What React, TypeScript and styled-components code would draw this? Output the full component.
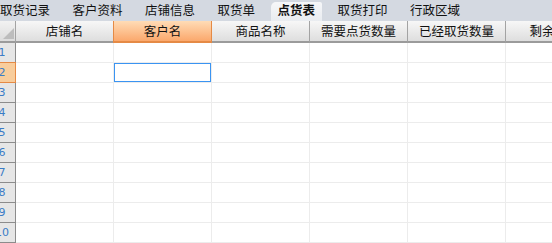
import React from "react";
import styled, { createGlobalStyle, css } from "styled-components";

const Global = createGlobalStyle`
  html, body { margin: 0; padding: 0; background: #ffffff; }
  body { overflow: hidden; font-family: "Noto Sans CJK SC", "Noto Sans", sans-serif; }
`;

const Screen = styled.div`
  width: 552px;
  height: 243px;
  overflow: hidden;
  background: #ffffff;
`;

const TabBar = styled.div`
  display: flex;
  align-items: flex-end;
  height: 21px;
  gap: 8.5px;
  background: #d4d9e1;
  padding-left: 0;
`;

const TabList = styled.div`
  display: flex;
  align-items: flex-end;
  gap: 8.5px;
  margin-left: -7px;
  height: 100%;
`;

const Tab = styled.div<{ $active?: boolean }>`
  height: 19px;
  padding: 0 7px;
  display: flex;
  align-items: center;
  font-size: 12.5px;
  line-height: 1;
  color: #111111;
  white-space: nowrap;
  border-radius: 5px 2px 0 0;
  padding-bottom: 3px;
  box-sizing: border-box;
  ${(p) =>
    p.$active &&
    css`
      font-weight: 700;
      background: linear-gradient(#f6f7f9, #e9ecf0);
    `}
`;

const Sheet = styled.div`
  display: grid;
  grid-template-columns: 16px repeat(6, 98px);
  grid-template-rows: 22px repeat(10, 20px);
`;

const Corner = styled.div`
  box-sizing: border-box;
  border-right: 1px solid #a3a3a3;
  border-bottom: 2px solid #9b9b9b;
  background: linear-gradient(#f2f2f2, #dcdcdc);
  display: flex;
  align-items: flex-end;
  justify-content: flex-end;
  padding: 0 1px 2px 0;
`;

const HeadCell = styled.div<{ $selected?: boolean }>`
  box-sizing: border-box;
  border-right: 1px solid #a3a3a3;
  border-bottom: 2px solid #9b9b9b;
  background: linear-gradient(#f7f7f7, #dedede);
  display: flex;
  align-items: center;
  justify-content: center;
  font-size: 12.5px;
  color: #111111;
  white-space: nowrap;
  overflow: hidden;
  padding-bottom: 1px;
  ${(p) =>
    p.$selected &&
    css`
      margin-left: -1px;
      border-left: 1px solid #e58a45;
      border-right-color: #e58a45;
      border-bottom-color: #e58a45;
      background: linear-gradient(#ffdcb6, #fba86c);
    `}
`;

const RowHead = styled.div<{ $selected?: boolean }>`
  box-sizing: border-box;
  border-right: 1px solid #8c8c8c;
  border-bottom: 1px solid #8c8c8c;
  background: #e6e6e6;
  overflow: hidden;
  display: flex;
  align-items: center;
  ${(p) =>
    p.$selected &&
    css`
      margin-top: -1px;
      border-top: 1px solid #e58a45;
      border-right-color: #e58a45;
      border-bottom-color: #e58a45;
      background: #f8cd9c;
    `}
`;

const RowNum = styled.span`
  flex: 0 0 30px;
  margin-left: -13px;
  text-align: center;
  font-family: "DejaVu Sans", sans-serif;
  font-size: 11px;
  color: #3a7cc6;
`;

const Cell = styled.div<{ $active?: boolean }>`
  box-sizing: border-box;
  border-right: 1px solid #ececec;
  border-bottom: 1px solid #ececec;
  background: #ffffff;
  ${(p) =>
    p.$active &&
    css`
      box-shadow: inset 0 0 0 1px #3a94f2;
    `}
`;

const tabs = ["取货记录", "客户资料", "店铺信息", "取货单", "点货表", "取货打印", "行政区域"];
const columns = ["店铺名", "客户名", "商品名称", "需要点货数量", "已经取货数量", "剩余数量"];
const rows = [1, 2, 3, 4, 5, 6, 7, 8, 9, 10];

export default function App() {
  return (
    <Screen>
      <Global />
      <TabBar>
        <TabList>
          {tabs.map((t) => (
            <Tab key={t} $active={t === "点货表"}>
              {t}
            </Tab>
          ))}
        </TabList>
      </TabBar>
      <Sheet>
        <Corner>
          <svg width="11" height="11" viewBox="0 0 11 11">
            <polygon points="11,0 11,11 0,11" fill="#bdbdbd" />
          </svg>
        </Corner>
        {columns.map((c, i) => (
          <HeadCell key={c} $selected={i === 1}>
            {c}
          </HeadCell>
        ))}
        {rows.map((r) => (
          <React.Fragment key={r}>
            <RowHead $selected={r === 2}>
              <RowNum>{r}</RowNum>
            </RowHead>
            {columns.map((c, i) => (
              <Cell key={c} $active={r === 2 && i === 1} />
            ))}
          </React.Fragment>
        ))}
      </Sheet>
    </Screen>
  );
}
